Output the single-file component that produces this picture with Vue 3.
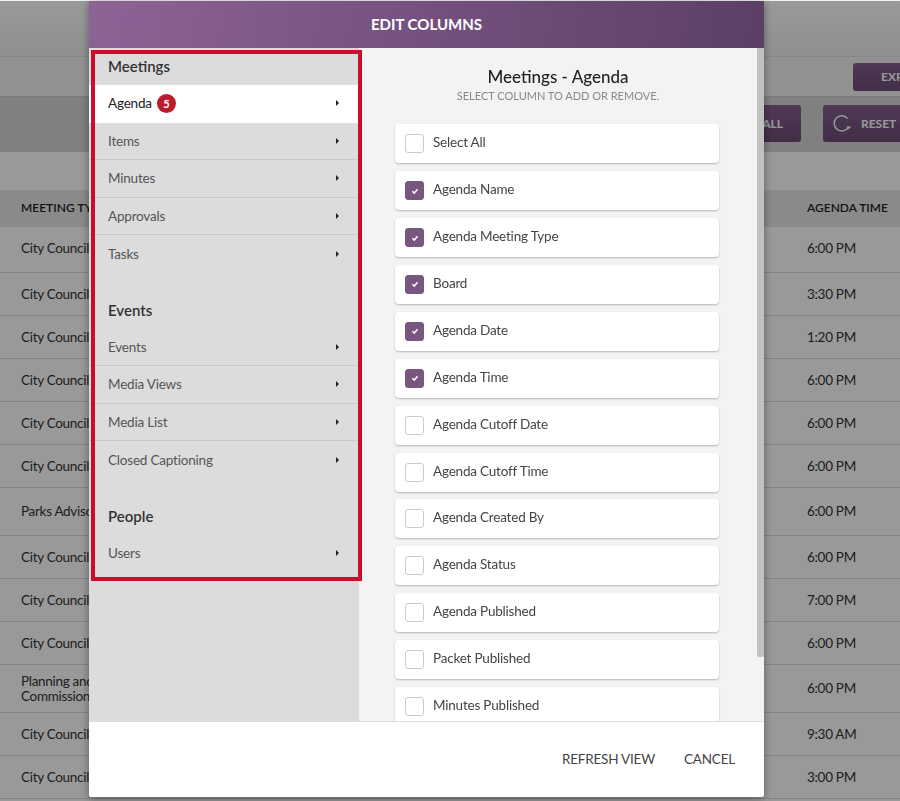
<script setup>
import { ref, computed } from 'vue'

const rows = [
  { type: 'City Council', time: '6:00 PM', cls: 'r46' },
  { type: 'City Council', time: '3:30 PM' },
  { type: 'City Council', time: '1:20 PM' },
  { type: 'City Council', time: '6:00 PM' },
  { type: 'City Council', time: '6:00 PM' },
  { type: 'City Council', time: '6:00 PM' },
  { type: 'Parks Advisory', time: '6:00 PM', cls: 'r48' },
  { type: 'City Council', time: '6:00 PM' },
  { type: 'City Council', time: '7:00 PM' },
  { type: 'City Council', time: '6:00 PM' },
  { type: 'Planning and Commission', time: '6:00 PM', cls: 'r48' },
  { type: 'City Council', time: '9:30 AM' },
  { type: 'City Council', time: '3:00 PM' }
]

const groups = [
  { title: 'Meetings', items: ['Agenda', 'Items', 'Minutes', 'Approvals', 'Tasks'] },
  { title: 'Events', items: ['Events', 'Media Views', 'Media List', 'Closed Captioning'] },
  { title: 'People', items: ['Users'] }
]

const active = ref('Agenda')

const columns = ref([
  { name: 'Agenda Name', on: true },
  { name: 'Agenda Meeting Type', on: true },
  { name: 'Board', on: true },
  { name: 'Agenda Date', on: true },
  { name: 'Agenda Time', on: true },
  { name: 'Agenda Cutoff Date', on: false },
  { name: 'Agenda Cutoff Time', on: false },
  { name: 'Agenda Created By', on: false },
  { name: 'Agenda Status', on: false },
  { name: 'Agenda Published', on: false },
  { name: 'Packet Published', on: false },
  { name: 'Minutes Published', on: false }
])

const count = computed(() => columns.value.filter((c) => c.on).length)
const allOn = computed(() => count.value === columns.value.length)

function toggleAll() {
  const next = !allOn.value
  columns.value.forEach((c) => (c.on = next))
}
</script>

<template>
  <div class="page">
    <div class="topbar"></div>
    <div class="toolbar">
      <button class="btn exp">EXPORT</button>
    </div>
    <div class="actions">
      <button class="btn all">SELECT ALL</button>
      <button class="btn reset">
        <svg width="20" height="20" viewBox="0 0 20 20" fill="none">
          <path d="M16.6 12.6A7.6 7.6 0 1 1 15.6 4.4" stroke="currentColor" stroke-width="1.5" />
          <path d="M14.4 12.4h5l-2.5 2.8z" fill="currentColor" />
        </svg>
        RESET
      </button>
    </div>
    <div class="spacer"></div>
    <div class="thead">
      <span class="type">MEETING TYPE</span>
      <span class="time">AGENDA TIME</span>
    </div>
    <div v-for="(row, i) in rows" :key="i" class="row" :class="row.cls">
      <span class="type">{{ row.type }}</span>
      <span class="time">{{ row.time }}</span>
    </div>
  </div>

  <div class="overlay"></div>

  <div class="modal">
    <header class="modal-head">EDIT COLUMNS</header>
    <div class="modal-body">
      <aside class="side">
        <section v-for="group in groups" :key="group.title" class="group">
          <h3>{{ group.title }}</h3>
          <a
            v-for="item in group.items"
            :key="item"
            class="side-item"
            :class="{ active: active === item && group.title === 'Meetings' }"
          >
            <span>{{ item }}</span>
            <b v-if="item === 'Agenda'" class="badge">{{ count }}</b>
            <i class="caret"></i>
          </a>
        </section>
        <div class="highlight"></div>
      </aside>
      <main class="panel">
        <div class="scroller">
          <h2>Meetings - Agenda</h2>
          <p class="hint">SELECT COLUMN TO ADD OR REMOVE.</p>
          <ul class="cols">
            <li class="card" @click="toggleAll">
              <span class="box" :class="{ on: allOn }"></span>
              <span class="label">Select All</span>
            </li>
            <li v-for="col in columns" :key="col.name" class="card" @click="col.on = !col.on">
              <span class="box" :class="{ on: col.on }">
                <svg v-if="col.on" width="10" height="10" viewBox="0 0 10 10" fill="none">
                  <path d="M2.4 5.2l1.8 1.9L7.6 3.2" stroke="#fff" stroke-width="1.5" />
                </svg>
              </span>
              <span class="label">{{ col.name }}</span>
            </li>
          </ul>
        </div>
        <div class="scrollbar"><div class="thumb"></div></div>
      </main>
    </div>
    <footer class="modal-foot">
      <a>REFRESH VIEW</a>
      <a>CANCEL</a>
    </footer>
  </div>
</template>

<style>
html,
body {
  margin: 0;
  height: 100%;
  overflow: hidden;
}
</style>

<style scoped>
.page {
  height: 801px;
  overflow: hidden;
  background: #fff;
  border-top: 1px solid #f2f2f2;
  box-sizing: border-box;
  font-family: Lato, sans-serif;
  font-size: 13.5px;
  letter-spacing: -0.3px;
  color: #333;
}

.topbar {
  height: 55px;
  background: linear-gradient(#fff, #f0f0f0);
  border-bottom: 1px solid #e2e2e2;
}

.toolbar {
  height: 39px;
  display: flex;
  justify-content: flex-end;
  align-items: center;
  background: #f4f4f4;
  border-bottom: 1px solid #ccc;
}

.actions {
  height: 55px;
  display: flex;
  justify-content: flex-end;
  align-items: flex-start;
  gap: 22px;
  padding-top: 8px;
  box-sizing: border-box;
  background: #d6d6d6;
}

.btn {
  height: 37px;
  border: none;
  border-radius: 3px;
  color: #fff;
  font: 700 12px Lato, sans-serif;
  background: linear-gradient(#845f8e, #6f4d78);
  display: flex;
  align-items: center;
  white-space: nowrap;
}

.exp {
  height: 28px;
  width: 96px;
  margin-right: -49px;
  padding-left: 28px;
}

.all {
  width: 130px;
  justify-content: flex-end;
  padding-right: 18px;
}

.reset {
  width: 120px;
  margin-right: -43px;
  padding-left: 9px;
  gap: 9px;
}

.spacer {
  height: 38px;
}

.thead,
.row {
  display: flex;
  justify-content: space-between;
  align-items: center;
  padding: 0 11px 0 21px;
}

.thead {
  height: 37px;
  padding-bottom: 2px;
  box-sizing: border-box;
  background: #e6e6e6;
  font-size: 12px;
  font-weight: 600;
  color: #222;
  letter-spacing: 0;
  white-space: nowrap;
}

.row {
  height: 43px;
  padding-bottom: 0;
  box-sizing: border-box;
  border-bottom: 1px solid #ddd;
  line-height: 15px;
}

.r46 {
  height: 46px;
  padding-bottom: 3px;
}

.r48 {
  height: 48px;
}

.type {
  width: 100px;
}

.time {
  width: 82px;
}

.overlay {
  position: fixed;
  inset: 1px 0 0;
  background: rgba(0, 0, 0, 0.4);
}

.modal {
  position: fixed;
  left: 89px;
  top: 1px;
  width: 675px;
  height: 796px;
  display: flex;
  flex-direction: column;
  overflow: hidden;
  border-radius: 0 0 3px 3px;
  background: #fff;
  box-shadow: 0 2px 8px rgba(0, 0, 0, 0.4);
  font-family: Lato, sans-serif;
}

.modal-head {
  height: 47px;
  padding-bottom: 2px;
  box-sizing: border-box;
  flex: none;
  display: flex;
  align-items: center;
  justify-content: center;
  background: linear-gradient(100deg, #8d6396, #5b3f65);
  color: #fff;
  font-size: 15px;
  font-weight: 700;
}

.modal-body {
  flex: 1;
  min-height: 0;
  display: flex;
}

.side {
  position: relative;
  width: 270px;
  flex: none;
  background: #dcdcdc;
}

.group {
  margin-bottom: 19px;
}

.group h3 {
  margin: 0;
  height: 37px;
  line-height: 37px;
  padding-left: 19px;
  font-size: 15px;
  font-weight: 600;
  color: #333;
}

.side-item {
  height: 37.5px;
  padding: 0 19px;
  box-sizing: border-box;
  display: flex;
  align-items: center;
  font-size: 13.5px;
  letter-spacing: -0.2px;
  color: #555;
  border-bottom: 1px solid #c9c9c9;
}

.side-item:last-child {
  border-bottom: none;
}

.side-item.active {
  background: #fff;
  color: #222;
  border-bottom: none;
  padding-bottom: 1px;
}

.badge {
  width: 19px;
  height: 19px;
  margin-left: 5px;
  border-radius: 50%;
  background: #bb1c2c;
  color: #fff;
  font-size: 11px;
  line-height: 19px;
  text-align: center;
}

.caret {
  margin-left: auto;
  margin-right: 1px;
  width: 0;
  height: 0;
  border-left: 3px solid #222;
  border-top: 3px solid transparent;
  border-bottom: 3px solid transparent;
}

.highlight {
  position: absolute;
  left: 2px;
  top: 2px;
  width: 263px;
  height: 523px;
  border: 4px solid #cf0a2c;
  pointer-events: none;
}

.panel {
  flex: 1;
  min-width: 0;
  display: flex;
  background: #f3f3f3;
}

.scroller {
  flex: 1;
  min-width: 0;
  overflow-y: auto;
  scrollbar-width: none;
  text-align: center;
  padding-top: 19px;
  box-sizing: border-box;
}

.scrollbar {
  width: 7px;
  flex: none;
}

.thumb {
  height: 609px;
  background: #c1c1c1;
  border-radius: 0 0 2px 2px;
}

.panel h2 {
  margin: 0;
  font-size: 17px;
  font-weight: 500;
  line-height: 20px;
  color: #222;
}

.hint {
  margin: 1px 0 0;
  font-size: 11px;
  line-height: 16px;
  color: #888;
}

.cols {
  list-style: none;
  margin: 20.3px 38px 0 36px;
  padding: 0 0 64px;
}

.card {
  height: 39px;
  margin-bottom: 7.9px;
  box-sizing: border-box;
  display: flex;
  align-items: center;
  gap: 9px;
  padding-left: 10px;
  background: #fff;
  border-radius: 4px;
  box-shadow: 0 1px 2px rgba(0, 0, 0, 0.25);
  font-size: 13.5px;
  letter-spacing: -0.2px;
  color: #444;
  text-align: left;
}

.label {
  margin-bottom: 3px;
}

.box {
  width: 19px;
  height: 19px;
  box-sizing: border-box;
  border: 1px solid #ccc;
  border-radius: 3px;
  background: #fff;
  display: flex;
  align-items: center;
  justify-content: center;
}

.box.on {
  background: #77567f;
  border-color: #77567f;
}

.modal-foot {
  height: 76px;
  flex: none;
  display: flex;
  justify-content: flex-end;
  align-items: center;
  gap: 29px;
  padding: 0 29px 2px 0;
  background: #fff;
  border-top: 1px solid #ddd;
  box-sizing: border-box;
  font-size: 13.5px;
  letter-spacing: -0.2px;
  color: #444;
}
</style>
